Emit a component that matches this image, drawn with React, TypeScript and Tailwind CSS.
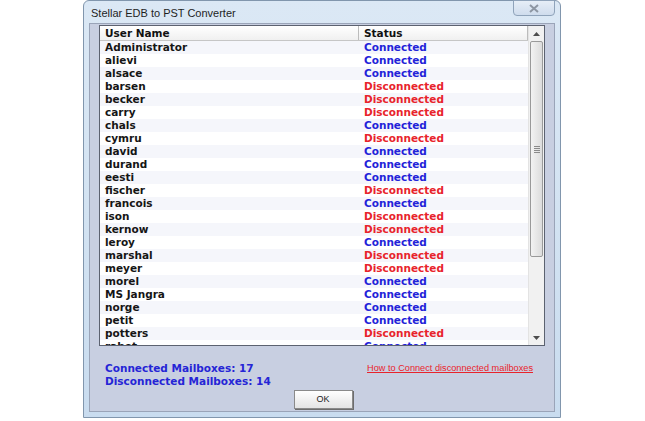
import type { ReactNode } from 'react'

type Mailbox = {
  name: string
  connected: boolean
}

const mailboxes: Mailbox[] = [
  { name: 'Administrator', connected: true },
  { name: 'alievi', connected: true },
  { name: 'alsace', connected: true },
  { name: 'barsen', connected: false },
  { name: 'becker', connected: false },
  { name: 'carry', connected: false },
  { name: 'chals', connected: true },
  { name: 'cymru', connected: false },
  { name: 'david', connected: true },
  { name: 'durand', connected: true },
  { name: 'eesti', connected: true },
  { name: 'fischer', connected: false },
  { name: 'francois', connected: true },
  { name: 'ison', connected: false },
  { name: 'kernow', connected: false },
  { name: 'leroy', connected: true },
  { name: 'marshal', connected: false },
  { name: 'meyer', connected: false },
  { name: 'morel', connected: true },
  { name: 'MS Jangra', connected: true },
  { name: 'norge', connected: true },
  { name: 'petit', connected: true },
  { name: 'potters', connected: false },
  { name: 'rabot', connected: true },
]

function ArrowButton({ children }: { children: ReactNode }) {
  return (
    <div className="flex h-[15px] items-center justify-center text-[#4d4d4d]">{children}</div>
  )
}

function Scrollbar() {
  return (
    <div className="flex w-[16px] flex-col border-l border-[#e3e3e3] bg-[#f1f1f1]">
      <ArrowButton>
        <svg width="7" height="4" viewBox="0 0 7 4">
          <path d="M0 4 L3.5 0 L7 4 Z" fill="currentColor" />
        </svg>
      </ArrowButton>
      <div className="mx-[1px] flex h-[216px] items-center justify-center rounded-[2px] border border-[#9a9a9a] bg-gradient-to-r from-[#f3f3f3] to-[#dcdcdc]">
        <div className="flex flex-col gap-[1px]">
          <div className="h-[1px] w-[6px] bg-[#8a8a8a]" />
          <div className="h-[1px] w-[6px] bg-[#8a8a8a]" />
          <div className="h-[1px] w-[6px] bg-[#8a8a8a]" />
          <div className="h-[1px] w-[6px] bg-[#8a8a8a]" />
        </div>
      </div>
      <div className="flex-1" />
      <ArrowButton>
        <svg width="7" height="4" viewBox="0 0 7 4">
          <path d="M0 0 L7 0 L3.5 4 Z" fill="currentColor" />
        </svg>
      </ArrowButton>
    </div>
  )
}

export default function App() {
  const font = { fontFamily: 'Verdana, "DejaVu Sans", sans-serif' }
  const sans = { fontFamily: '"Liberation Sans", Arial, sans-serif' }

  return (
    <div className="h-[421px] w-[645px] overflow-hidden bg-white">
      <div className="ml-[83px] flex h-[418px] w-[478px] flex-col rounded-t-[6px] border border-[#8196ad] bg-gradient-to-b from-[#dbe8f5] via-[#d3e3f2] to-[#c9dcef] px-[5px] pb-[5px]">
        <div className="relative flex h-[22px] shrink-0 items-center pl-[2px] pt-[3px]">
          <span className="text-[11px] text-[#1e1e1e]" style={sans}>
            Stellar EDB to PST Converter
          </span>
          <div className="absolute right-[0px] top-[-1px] flex h-[16px] w-[42px] items-center justify-center rounded-b-[4px] border border-[#8fa3ba] bg-gradient-to-b from-[#e6eef7] to-[#cfdced]">
            <svg width="10" height="9" viewBox="0 0 10 9">
              <path d="M1 1 L9 8 M9 1 L1 8" stroke="#8d96a3" strokeWidth="2" />
            </svg>
          </div>
        </div>

        <div className="flex min-h-0 flex-1 flex-col border border-[#9aa4b8] bg-[#c8cfe1] px-[9px] pt-[1px]">
          <div className="flex h-[321px] shrink-0 overflow-hidden border border-[#5c6270] bg-white">
            <div className="flex flex-1 flex-col overflow-hidden" style={font}>
              <div className="flex h-[15px] shrink-0 border-b border-[#c6c6c6] bg-gradient-to-b from-white to-[#f0f0f0] text-[10.5px] font-bold leading-[14px] text-[#111]">
                <div className="w-[259px] border-r border-[#bcbcbc] pl-[5px]">User Name</div>
                <div className="flex-1 border-r border-[#bcbcbc] pl-[5px]">Status</div>
              </div>
              {mailboxes.map((m, i) => (
                <div
                  key={m.name}
                  className={`flex h-[13px] shrink-0 text-[10.5px] font-bold leading-[13px] ${i % 2 === 0 ? 'bg-[#f5f6fb]' : 'bg-white'}`}
                >
                  <div className="w-[259px] pl-[5px] text-[#151515]">{m.name}</div>
                  <div
                    className={`flex-1 pl-[5px] ${m.connected ? 'text-[#2323d9]' : 'text-[#e8242c]'}`}
                  >
                    {m.connected ? 'Connected' : 'Disconnected'}
                  </div>
                </div>
              ))}
            </div>
            <Scrollbar />
          </div>

          <div className="flex items-start pl-[6px] pt-[16px]" style={font}>
            <div className="w-[262px] text-[10.5px] font-bold leading-[13px] text-[#2525d6]">
              <div>Connected Mailboxes: 17</div>
              <div>Disconnected Mailboxes: 14</div>
            </div>
            <div className="text-[9.2px] leading-[12px] text-[#e8242c] underline" style={sans}>
              How to Connect disconnected mailboxes
            </div>
          </div>

          <div className="flex justify-center pl-[2px] pt-[2px]">
            <button
              className="flex h-[19px] w-[59px] items-center justify-center border border-[#8a8a8a] bg-gradient-to-b from-white to-[#e4e4e4] text-[9px] text-[#222] shadow-[1px_1px_0_#6d6d6d]"
              style={sans}
            >
              OK
            </button>
          </div>
        </div>
      </div>
    </div>
  )
}
